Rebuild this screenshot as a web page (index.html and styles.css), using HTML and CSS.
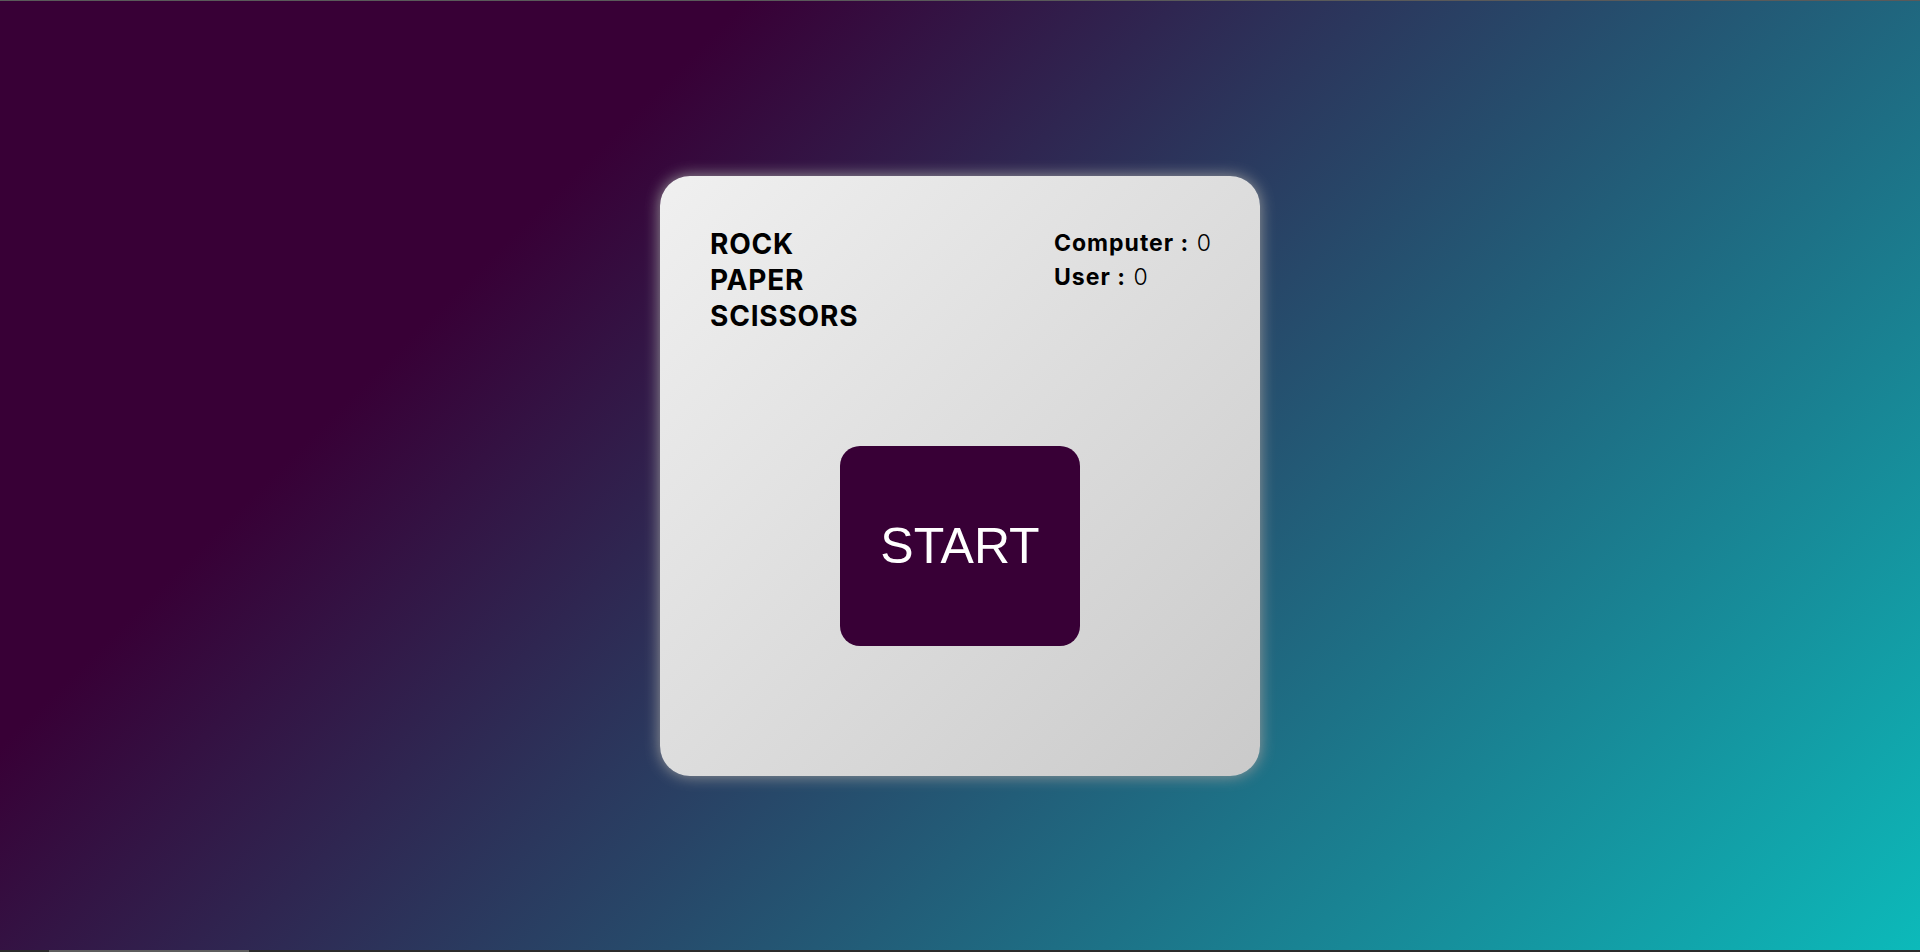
FILE: index.html
```html
<!DOCTYPE html>
<html lang="en">
<head>
<meta charset="utf-8">
<title>Rock Paper Scissors</title>
<link rel="stylesheet" href="styles.css">
</head>
<body>
<main class="stage">
  <section class="card">
    <header class="card-head">
      <h1 class="title">ROCK<br>PAPER<br>SCISSORS</h1>
      <div class="scores">
        <p class="score"><b>Computer :</b> <span>0</span></p>
        <p class="score"><b>User :</b> <span>0</span></p>
      </div>
    </header>
    <button class="start">START</button>
  </section>
</main>
<div class="hscroll"><div class="thumb"></div></div>
</body>
</html>
```

FILE: styles.css
```css
* { box-sizing: border-box; }
html, body { height: 100%; }
body {
  margin: 0;
  display: flex;
  flex-direction: column;
  border-top: 1px solid #5a5a5a;
  background-image: linear-gradient(315deg, #0cbaba 0%, #380036 74%);
  overflow: hidden;
}
.stage {
  flex: 1;
  display: flex;
  align-items: center;
  justify-content: center;
}
.card {
  width: 600px;
  height: 600px;
  padding: 50px;
  border-radius: 30px;
  background-image: linear-gradient(315deg, #cacaca 0%, #f0f0f0 100%);
  box-shadow: 0 0 15px #9a9a9a;
  display: flex;
  flex-direction: column;
}
.card-head {
  display: flex;
  justify-content: space-between;
  align-items: flex-start;
}
.title {
  margin: 0;
  font-family: Inter, "Liberation Sans", sans-serif;
  font-weight: 700;
  font-size: 28px;
  line-height: 36px;
  color: #000;
  letter-spacing: 0.8px;
}
.scores {
  margin-right: -2px;
}
.score {
  margin: 0;
  font-family: Inter, "Liberation Sans", sans-serif;
  font-size: 23px;
  line-height: 34px;
  letter-spacing: 1px;
  color: #000;
}
.score b { font-weight: 700; }
.score span { font-weight: 300; }
.start {
  align-self: center;
  margin-top: 112px;
  width: 240px;
  height: 200px;
  border: none;
  border-radius: 20px;
  background: #380036;
  color: #fff;
  font-family: "Liberation Sans", Arial, sans-serif;
  font-size: 50px;
  padding: 0;
}
.hscroll {
  height: 2px;
  background: #2b2b2b;
  padding-left: 49px;
}
.thumb {
  width: 200px;
  height: 2px;
  background: #5e5e5e;
}
```
